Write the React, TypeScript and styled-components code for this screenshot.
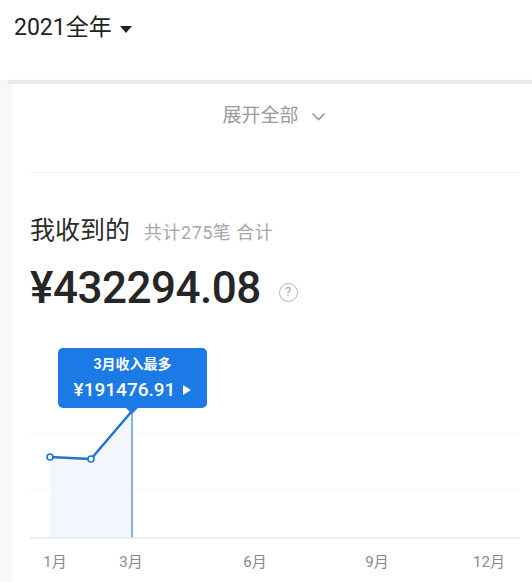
import styled, { createGlobalStyle } from 'styled-components';

const GlobalStyle = createGlobalStyle`
  * { box-sizing: border-box; }
  body {
    margin: 0;
    background: #ffffff;
    font-family: Roboto, "Noto Sans CJK SC", sans-serif;
    color: #222222;
  }
`;

//Styled components
const Page = styled.div`
  width: 532px;
  height: 582px;
  overflow: hidden;
  background: #f8f8f8;
`;

const Header = styled.header`
  height: 80px;
  background: #ffffff;
  padding: 13px 14px 0;
`;

const YearPicker = styled.div`
  display: inline-flex;
  align-items: center;
  gap: 8px;
  font-size: 23px;
  line-height: 30px;
  color: #222222;
`;

const Caret = styled.span`
  width: 0;
  height: 0;
  border-left: 6px solid transparent;
  border-right: 6px solid transparent;
  border-top: 7px solid #222222;
  margin-top: 2px;
`;

const Band = styled.div`
  height: 4px;
  margin-left: 8px;
  background: #ebebeb;
  box-shadow: 0 2px 6px rgba(0, 0, 0, 0.05);
`;

const Card = styled.section`
  margin-left: 12px;
  background: #ffffff;
  height: 498px;
`;

const ExpandRow = styled.div`
  height: 88px;
  padding: 19px 0 0 4px;
  display: flex;
  justify-content: center;
  align-items: flex-start;
  gap: 12px;
  font-size: 19px;
  line-height: 26px;
  color: #9a9a9a;
`;

const Divider = styled.div`
  height: 1px;
  margin: 0 12px 0 18px;
  background: #f3f3f3;
`;

const Summary = styled.div`
  padding: 43px 0 0 18px;
`;

const TitleRow = styled.div`
  display: flex;
  align-items: baseline;
  gap: 14px;
  line-height: 30px;
`;

const Title = styled.span`
  font-size: 25px;
  color: #2a2a2a;
`;

const Meta = styled.span`
  font-size: 18px;
  letter-spacing: 0.5px;
  color: #a8a8a8;
`;

const AmountRow = styled.div`
  display: flex;
  align-items: center;
  gap: 18px;
  margin-top: 16px;
  height: 48px;
`;

const Amount = styled.span`
  font-size: 44px;
  font-weight: 500;
  letter-spacing: -0.5px;
  color: #262626;
  line-height: 48px;
`;

const HelpIcon = styled.span`
  width: 19px;
  height: 19px;
  border: 1.5px solid #b4b4b4;
  border-radius: 50%;
  color: #a8a8a8;
  font-size: 13px;
  line-height: 16px;
  text-align: center;
  margin-top: 8px;
`;

const ChartWrap = styled.div`
  position: relative;
  height: 271px;
`;

const Tooltip = styled.div`
  position: absolute;
  left: 46px;
  top: 36px;
  width: 149px;
  height: 60px;
  border-radius: 5px;
  background: #1b7ae6;
  color: #ffffff;
  display: flex;
  flex-direction: column;
  align-items: center;
  padding-top: 5px;

  &::after {
    content: '';
    position: absolute;
    left: 68px;
    bottom: -6px;
    border-left: 6px solid transparent;
    border-right: 6px solid transparent;
    border-top: 6px solid #1b7ae6;
  }
`;

const TipTitle = styled.div`
  font-size: 14px;
  font-weight: 700;
  line-height: 22px;
`;

const TipValue = styled.div`
  display: flex;
  align-items: center;
  gap: 8px;
  font-size: 19px;
  font-weight: 500;
  line-height: 28px;
  margin-top: 1px;
`;

const TipArrow = styled.span`
  width: 0;
  height: 0;
  border-top: 5px solid transparent;
  border-bottom: 5px solid transparent;
  border-left: 8px solid #ffffff;
`;

const months = [
  { label: '1月', x: 43 },
  { label: '3月', x: 119 },
  { label: '6月', x: 243 },
  { label: '9月', x: 365 },
  { label: '12月', x: 477 },
];

const points = [
  [38, 145],
  [79, 147],
  [120, 99],
];

export default function App() {
  const line = points.map((p) => p.join(',')).join(' ');
  return (
    <>
      <GlobalStyle />
      <Page>
        <Header>
          <YearPicker>
            2021全年
            <Caret />
          </YearPicker>
        </Header>
        <Band />
        <Card>
          <ExpandRow>
            展开全部
            <svg width='15' height='10' viewBox='0 0 15 10' style={{ marginTop: 9 }}>
              <path d='M1.5 1.5 L7.5 7.5 L13.5 1.5' fill='none' stroke='#9a9a9a' strokeWidth='1.6' />
            </svg>
          </ExpandRow>
          <Divider />
          <Summary>
            <TitleRow>
              <Title>我收到的</Title>
              <Meta>共计275笔 合计</Meta>
            </TitleRow>
            <AmountRow>
              <Amount>¥432294.08</Amount>
              <HelpIcon>?</HelpIcon>
            </AmountRow>
          </Summary>
          <ChartWrap>
            <svg width='520' height='271' viewBox='0 0 520 271'>
              <line x1='18' y1='121' x2='508' y2='121' stroke='#f9f9f9' />
              <line x1='18' y1='177' x2='508' y2='177' stroke='#f7f7f7' />
              <polygon points={`${line} 120,226 38,226`} fill='#f3f7fd' />
              <line x1='120' y1='100' x2='120' y2='226' stroke='#5a9ad6' strokeWidth='1.5' />
              <line x1='18' y1='226' x2='508' y2='226' stroke='#e4e8ee' strokeWidth='1.5' />
              <polyline points={line} fill='none' stroke='#1f73d2' strokeWidth='2.5' strokeLinejoin='round' />
              {points.slice(0, 2).map(([x, y]) => (
                <circle key={x} cx={x} cy={y} r='3' fill='#ffffff' stroke='#1f73d2' strokeWidth='1.6' />
              ))}
              {months.map((m) => (
                <text key={m.label} x={m.x} y='255' textAnchor='middle' fontSize='15' fill='#8a8a8a' fontFamily='Roboto, "Noto Sans CJK SC", sans-serif'>
                  {m.label}
                </text>
              ))}
            </svg>
            <Tooltip>
              <TipTitle>3月收入最多</TipTitle>
              <TipValue>
                ¥191476.91
                <TipArrow />
              </TipValue>
            </Tooltip>
          </ChartWrap>
        </Card>
      </Page>
    </>
  );
}
